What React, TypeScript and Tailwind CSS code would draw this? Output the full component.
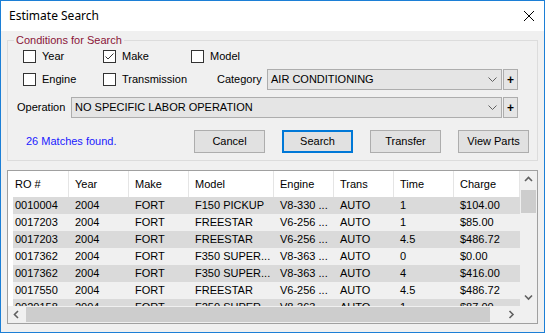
import React from "react"

const columns = [
    { label: "RO #", head: "w-[61px] pl-[7px]", cell: "w-[56px] pl-[2px]" },
    { label: "Year", head: "w-[60px] pl-[6px]", cell: "w-[60px] pl-[6px]" },
    { label: "Make", head: "w-[60px] pl-[6px]", cell: "w-[60px] pl-[6px]" },
    { label: "Model", head: "w-[85px] pl-[6px]", cell: "w-[85px] pl-[6px]" },
    { label: "Engine", head: "w-[60px] pl-[6px]", cell: "w-[60px] pl-[6px]" },
    { label: "Trans", head: "w-[60px] pl-[6px]", cell: "w-[60px] pl-[6px]" },
    { label: "Time", head: "w-[60px] pl-[6px]", cell: "w-[60px] pl-[6px]" },
    { label: "Charge", head: "flex-1 pl-[6px]", cell: "flex-1 pl-[6px]" },
]

const rows = [
    ["0010004", "2004", "FORT", "F150 PICKUP", "V8-330 ...", "AUTO", "1", "$104.00"],
    ["0017203", "2004", "FORT", "FREESTAR", "V6-256 ...", "AUTO", "1", "$85.00"],
    ["0017203", "2004", "FORT", "FREESTAR", "V6-256 ...", "AUTO", "4.5", "$486.72"],
    ["0017362", "2004", "FORT", "F350 SUPER...", "V8-363 ...", "AUTO", "0", "$0.00"],
    ["0017362", "2004", "FORT", "F350 SUPER...", "V8-363 ...", "AUTO", "4", "$416.00"],
    ["0017550", "2004", "FORT", "FREESTAR", "V6-256 ...", "AUTO", "4.5", "$486.72"],
    ["0020158", "2004", "FORT", "F250 SUPER...", "V8-363 ...", "AUTO", "1", "$87.00"],
]

function CheckBox({ label, checked = false }: { label: string; checked?: boolean }) {
    return (
        <div className="flex items-center gap-[6px]">
            <span className="flex h-[13px] w-[13px] items-center justify-center border border-[#333333] bg-white">
                {checked && (
                    <svg width="11" height="11" viewBox="0 0 11 11">
                        <path d="M1.5 5.5 L4 8 L9.5 2.5" fill="none" stroke="#333333" strokeWidth="1" />
                    </svg>
                )}
            </span>
            <span>{label}</span>
        </div>
    )
}

function Combo({ value, width }: { value: string; width: string }) {
    return (
        <div className="flex h-full items-center">
            <div className={`flex h-full items-center justify-between border border-[#adadad] bg-[#e5e5e5] pl-[3px] pr-[4px] ${width}`}>
                <span>{value}</span>
                <svg width="9" height="5" viewBox="0 0 9 5">
                    <path d="M0.5 0.5 L4.5 4.5 L8.5 0.5" fill="none" stroke="#606060" strokeWidth="1" />
                </svg>
            </div>
            <button className="ml-[1px] flex h-full w-[15px] items-center justify-center border border-[#adadad] bg-[#e5e5e5] text-[12px] font-bold leading-none">
                +
            </button>
        </div>
    )
}

function WinButton({ label, focused = false }: { label: string; focused?: boolean }) {
    return (
        <button
            className={`h-[23px] w-[71px] bg-[#e1e1e1] ${focused ? "border-2 border-[#0078d7]" : "border border-[#adadad]"}`}
        >
            {label}
        </button>
    )
}

function Chevron({ dir }: { dir: "up" | "down" | "left" | "right" }) {
    const d = {
        up: "M1 5 L4.5 1.5 L8 5",
        down: "M1 1.5 L4.5 5 L8 1.5",
        left: "M5 1 L1.5 4.5 L5 8",
        right: "M1.5 1 L5 4.5 L1.5 8",
    }[dir]
    const horiz = dir === "up" || dir === "down"
    return (
        <svg width={horiz ? 9 : 7} height={horiz ? 7 : 9} viewBox={horiz ? "0 0 9 7" : "0 0 7 9"}>
            <path d={d} fill="none" stroke="#606060" strokeWidth="1.6" />
        </svg>
    )
}

export default function App() {
    return (
        <div className="flex h-[333px] w-[545px] flex-col border border-[#1c7fd6] bg-[#f0f0f0] font-['Liberation_Sans',Arial,sans-serif] text-[11px] text-black">
            {/* title bar */}
            <div className="flex h-[30px] shrink-0 items-center justify-between bg-white pl-[8px] pr-[10px]">
                <span className="font-['Noto_Sans',sans-serif] text-[12px]">Estimate Search</span>
                <svg width="10" height="10" viewBox="0 0 10 10">
                    <path d="M0 0 L10 10 M10 0 L0 10" stroke="#000" strokeWidth="1" />
                </svg>
            </div>

            <div className="flex flex-1 flex-col px-[6px] pt-[3px]">
                <fieldset className="border border-[#dcdcdc] pb-[7px]">
                    <legend className="ml-[6px] px-[2px] leading-[13px] text-[#8a1538]">Conditions for Search</legend>

                    <div className="mt-[3px] flex h-[13px] items-center pl-[15px]">
                        <div className="w-[80px]">
                            <CheckBox label="Year" />
                        </div>
                        <div className="w-[88px]">
                            <CheckBox label="Make" checked />
                        </div>
                        <CheckBox label="Model" />
                    </div>

                    <div className="mt-[6px] flex h-[21px] items-center pl-[15px]">
                        <div className="w-[80px]">
                            <CheckBox label="Engine" />
                        </div>
                        <div className="w-[114px]">
                            <CheckBox label="Transmission" />
                        </div>
                        <span className="w-[50px]">Category</span>
                        <Combo value="AIR CONDITIONING" width="w-[235px]" />
                    </div>

                    <div className="mt-[7px] flex h-[21px] items-center pl-[9px]">
                        <span className="w-[54px]">Operation</span>
                        <Combo value="NO SPECIFIC LABOR OPERATION" width="w-[431px]" />
                    </div>

                    <div className="mt-[12px] flex h-[23px] items-center pl-[18px] pr-[8px]">
                        <span className="flex-1 text-[#1a1aff]">26 Matches found.</span>
                        <div className="flex gap-[17px]">
                            <WinButton label="Cancel" />
                            <WinButton label="Search" focused />
                            <WinButton label="Transfer" />
                            <WinButton label="View Parts" />
                        </div>
                    </div>
                </fieldset>

                {/* results list */}
                <div className="mt-[9px] flex h-[154px] flex-col border border-[#a0a0a0] bg-white">
                    <div className="flex h-[135px]">
                        <div className="flex flex-1 flex-col">
                            <div className="flex h-[26px] shrink-0">
                                {columns.map((c) => (
                                    <div key={c.label} className={`flex items-center border-r border-[#e5e5e5] ${c.head}`}>
                                        {c.label}
                                    </div>
                                ))}
                            </div>
                            <div className="flex-1 overflow-hidden pl-[5px]">
                                {rows.map((r, i) => (
                                    <div key={i} className={`flex h-[17px] items-center ${i % 2 === 0 ? "bg-[#dadada]" : "bg-[#f0f0f0]"}`}>
                                        {r.map((v, j) => (
                                            <div key={j} className={`whitespace-nowrap ${columns[j].cell}`}>
                                                {v}
                                            </div>
                                        ))}
                                    </div>
                                ))}
                            </div>
                        </div>
                        {/* vertical scrollbar */}
                        <div className="flex w-[17px] flex-col bg-[#f0f0f0]">
                            <div className="flex h-[17px] items-center justify-center">
                                <Chevron dir="up" />
                            </div>
                            <div className="mx-[1px] mt-[2px] h-[23px] bg-[#cdcdcd]" />
                            <div className="flex-1" />
                            <div className="flex h-[17px] items-center justify-center">
                                <Chevron dir="down" />
                            </div>
                        </div>
                    </div>
                    {/* horizontal scrollbar */}
                    <div className="flex h-[17px] bg-[#f0f0f0]">
                        <div className="flex w-[17px] items-center justify-center">
                            <Chevron dir="left" />
                        </div>
                        <div className="flex flex-1 items-center">
                            <div className="ml-[1px] h-[15px] w-[464px] bg-[#cdcdcd]" />
                        </div>
                        <div className="flex w-[17px] items-center justify-center">
                            <Chevron dir="right" />
                        </div>
                        <div className="w-[17px]" />
                    </div>
                </div>
            </div>
        </div>
    )
}
